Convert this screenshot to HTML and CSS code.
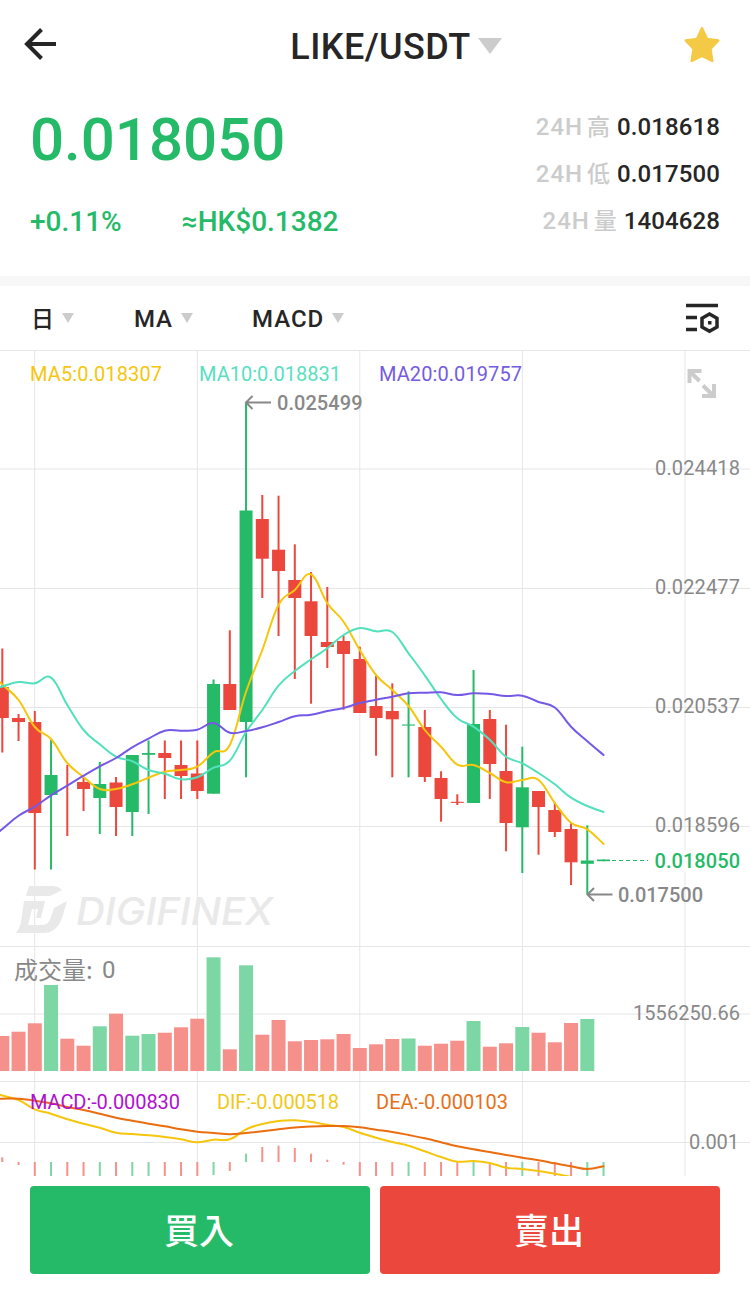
FILE: index.html
```html
<!DOCTYPE html>
<html lang="zh-Hant">
<head>
    <meta charset="UTF-8">
    <meta name="viewport" content="width=device-width, initial-scale=1.0">
    <title>LIKE/USDT</title>
    <link rel="stylesheet" href="styles.css">
</head>
<body>

    <!-- Top bar -->
    <header class="header">
        <svg class="back" width="34" height="34" viewBox="0 0 34 34">
            <path d="M33 17H4M18.500 2.500L4 17l14.500 14.500" />
        </svg>
        <h1 class="pair">LIKE/USDT <span class="caret caret-large"></span></h1>
        <svg class="star" width="38" height="38" viewBox="0 0 38 38">
            <path d="M19 2.200L24 13L35.300 14.500L27.400 22.800L29.300 35L19 29.800L8.700 35L10.600 22.800L2.700 14.500L14 13Z" />
        </svg>
    </header>

    <!-- Price summary -->
    <section class="summary">
        <div class="price-box">
            <div class="price">0.018050</div>
            <div class="change">
                <span class="percent">+0.11%</span>
                <span class="fiat">≈HK$0.1382</span>
            </div>
        </div>
        <div class="stats">
            <div class="stat"><span class="stat-label">24H<i>高</i></span><span class="stat-value">0.018618</span></div>
            <div class="stat"><span class="stat-label">24H<i>低</i></span><span class="stat-value">0.017500</span></div>
            <div class="stat"><span class="stat-label">24H<i>量</i></span><span class="stat-value">1404628</span></div>
        </div>
    </section>

    <!-- Chart toolbar -->
    <nav class="toolbar">
        <div class="tool tool-day"><span class="day">日</span> <span class="caret"></span></div>
        <div class="tool tool-ma">MA <span class="caret"></span></div>
        <div class="tool tool-macd">MACD <span class="caret"></span></div>
        <svg class="settings" width="36" height="32" viewBox="0 0 36 32">
            <path d="M2 3.500H34M2 15.500H13M2 27.500H13" />
            <path d="M25.500 12L33 16.200V25L25.500 29.200L18 25V16.200Z" />
            <rect x="24" y="19" width="3.500" height="3.500" />
        </svg>
    </nav>

    <!-- Candles, volume and MACD -->
    <svg class="chart" width="750" height="826" viewBox="0 350 750 826">
        <g id="grid"></g>

        <g class="watermark">
            <path d="M29 886H54Q60 887 62 890L50 896H26Z" />
            <path d="M24 901H45L41 918H36L38 909H32L28 925H43Q49 924 51 917L54 908L67 901L63 915Q58 933 43 933H15Q19 931 21 922Z" />
            <text x="76" y="925" textLength="197" lengthAdjust="spacingAndGlyphs">DIGIFINEX</text>
        </g>

        <g id="volume"></g>
        <g id="candles"></g>
        <g id="histogram"></g>
        <g id="lines"></g>

        <g class="legend">
            <text class="ma5" x="30" y="381" textLength="132">MA5:0.018307</text>
            <text class="ma10" x="199" y="381" textLength="142">MA10:0.018831</text>
            <text class="ma20" x="379" y="381" textLength="143">MA20:0.019757</text>
            <text class="macd" x="30" y="1109" textLength="150">MACD:-0.000830</text>
            <text class="dif" x="217" y="1109" textLength="122">DIF:-0.000518</text>
            <text class="dea" x="376" y="1109" textLength="132">DEA:-0.000103</text>
        </g>

        <g class="axis">
            <text x="655" y="475" textLength="85">0.024418</text>
            <text x="655" y="594" textLength="85">0.022477</text>
            <text x="655" y="713" textLength="85">0.020537</text>
            <text x="655" y="832" textLength="85">0.018596</text>
            <text x="633" y="1020" textLength="107">1556250.66</text>
            <text x="689" y="1149" textLength="50">0.001</text>
        </g>

        <path class="last-line" d="M612 860.500H648" />
        <rect class="last-back" x="652" y="850" width="90" height="22" />
        <text class="last" x="654.500" y="868" textLength="85.500">0.018050</text>

        <g class="marker">
            <path d="M271 402.500H246M252.500 396L246 402.500L252.500 409" />
            <text x="277" y="410" textLength="85.500">0.025499</text>
            <path d="M612.500 894.500H588M594 888L587.500 894.500L594 901" />
            <text x="618" y="902" textLength="85">0.017500</text>
        </g>

        <text class="volume-title" x="14" y="979">成交量:</text>
        <text class="volume-count" x="102" y="978">0</text>

        <path class="expand" d="M689.500 383V371H701.500M689.500 371L699.500 381M703 385.500L713 395.500M702 396H714V384" />
    </svg>

    <!-- Actions -->
    <footer class="actions">
        <button class="button buy">買入</button>
        <button class="button sell">賣出</button>
    </footer>

    <script src="script.js"></script>
</body>
</html>
```
FILE: styles.css
```css
body {
    margin: 0;
    width: 750px;
    height: 1294px;
    background-color: #fff;
    color: #262626;
    font-family: Roboto, "Noto Sans CJK TC", sans-serif;
    overflow: hidden;
}

.header {
    display: flex;
    justify-content: space-between;
    align-items: center;
    height: 92px;
    padding: 0 29px 0 23px;
    box-sizing: border-box;
}

.back {
    margin-top: -4px;
    fill: none;
    stroke: #262626;
    stroke-width: 4;
}

.pair {
    display: flex;
    align-items: center;
    margin: 2px 0 0 0;
    padding-left: 52px;
    font-size: 36px;
    font-weight: 500;
    letter-spacing: 0.4px;
}

.caret {
    display: inline-block;
    border-left: 6px solid transparent;
    border-right: 6px solid transparent;
    border-top: 10px solid #ccc;
}

.caret-large {
    margin: -3px 0 0 7px;
    border-left-width: 12px;
    border-right-width: 12px;
    border-top-width: 16px;
}

.star {
    margin-top: -3px;
    fill: #f4c945;
    stroke: #f4c945;
    stroke-width: 2.5;
    stroke-linejoin: round;
}

.summary {
    display: flex;
    justify-content: space-between;
    height: 184px;
    padding: 0 30px;
    border-bottom: 10px solid #f7f7f7;
}

.price-box {
    color: #25ba68;
    font-weight: 500;
}

.price {
    margin-top: 12px;
    font-size: 60px;
    line-height: 72px;
}

.change {
    display: flex;
    gap: 60px;
    margin-top: 29px;
    font-size: 28px;
    line-height: 34px;
}

.stats {
    padding-top: 12px;
}

.stat {
    display: flex;
    justify-content: flex-end;
    gap: 7px;
    height: 47px;
    line-height: 47px;
    font-size: 24px;
}

.stat-label {
    color: #ccc;
    font-weight: 500;
    letter-spacing: 1px;
}

.stat-label i {
    margin-left: 4px;
    font-size: 23px;
    font-style: normal;
    letter-spacing: 0;
}

.stat-value {
    font-weight: 500;
    letter-spacing: 0.1px;
}

.toolbar {
    display: flex;
    align-items: center;
    height: 64px;
    padding: 0 30px;
}

.tool {
    display: flex;
    align-items: center;
    gap: 8px;
    margin-top: 2px;
    font-size: 24px;
    font-weight: 500;
    letter-spacing: 0.7px;
}

.tool .caret {
    margin-top: -2px;
}

.tool-day {
    width: 103px;
    padding-left: 1px;
}

.day {
    margin-top: -4px;
    font-size: 23px;
    letter-spacing: 0;
}

.tool-ma {
    width: 118px;
}

.tool-macd {
    letter-spacing: 1px;
}

.settings {
    margin-left: auto;
    fill: none;
    stroke: #262626;
    stroke-width: 3.5;
}

.settings rect {
    fill: #262626;
    stroke: none;
}

.chart {
    display: block;
}

.grid {
    stroke: #e6e6e6;
    stroke-width: 1;
}

.up {
    fill: #25ba68;
}

.down {
    fill: #ec473c;
}

#volume .up,
#histogram .up {
    fill: #7cd7a5;
}

#volume .down,
#histogram .down {
    fill: #f5918a;
}

.line {
    fill: none;
    stroke-width: 2;
    stroke-linecap: round;
}

.line-ma5,
.line-dif {
    stroke: #f5c60d;
}

.line-ma10 {
    stroke: #52e0bd;
}

.line-ma20 {
    stroke: #7559e6;
}

.line-dea {
    stroke: #ea6d10;
}

.watermark {
    fill: #e9e9e9;
    font-family: Inter, sans-serif;
    font-size: 38px;
    font-style: italic;
    font-weight: 500;
}

.legend,
.axis {
    font-size: 20px;
}

.ma5 {
    fill: #f5c60d;
}

.ma10 {
    fill: #58dfbf;
}

.ma20 {
    fill: #745ce0;
}

.macd {
    fill: #b010d0;
}

.dif {
    fill: #f0c818;
}

.dea {
    fill: #e67018;
}

.axis {
    fill: #888;
}

.last-line {
    stroke: #25ba68;
    stroke-width: 1;
    stroke-dasharray: 4 3;
}

.last-back {
    fill: #fff;
}

.last {
    fill: #25ba68;
    font-size: 20px;
    font-weight: 500;
}

.marker path {
    fill: none;
    stroke: #888;
    stroke-width: 2;
}

.marker text {
    fill: #888;
    font-size: 20px;
    font-weight: 500;
}

.volume-title,
.volume-count {
    fill: #888;
    font-size: 24px;
}

.volume-title {
    font-family: "Noto Sans CJK TC", sans-serif;
}

.expand {
    fill: none;
    stroke: #ccc;
    stroke-width: 4;
}

.actions {
    display: flex;
    gap: 10px;
    padding: 10px 30px 0;
}

.button {
    flex: 1;
    height: 88px;
    padding: 0 2px 4px 0;
    border: none;
    border-radius: 4px;
    color: #fff;
    font-family: "Noto Sans CJK TC", sans-serif;
    font-size: 35px;
    font-weight: 500;
}

.buy {
    background-color: #25ba68;
}

.sell {
    background-color: #ec473c;
}
```
FILE: script.js
```js
const STEP = 16.25;
const START = 2.3;

// [direction, wick top, body top, body bottom, wick bottom]
const candles = [
    ['down', 648.5, 687, 718, 752.5], ['down', 714, 718, 722, 741], ['down', 711, 722, 813, 869.5],
    ['up', 740, 775, 795, 869.5], ['down', 765, 765, 765, 836], ['down', 777, 782, 789, 811],
    ['up', 762, 784, 798, 834], ['down', 777, 782.5, 807, 836], ['up', 755, 755, 812, 836],
    ['up', 740.5, 753, 754.8, 814], ['down', 740.5, 753, 758, 799], ['down', 740.5, 765, 776, 799],
    ['down', 740.5, 773.5, 791, 799], ['up', 679.5, 684, 793.7, 793.7], ['down', 630.3, 684, 710, 710],
    ['up', 402.7, 510.5, 722, 777.3], ['down', 495, 519, 558.7, 598], ['down', 495.7, 549.7, 571, 636],
    ['down', 544.3, 580, 598, 679], ['down', 572, 601.3, 636, 703.7], ['down', 587, 642, 647, 668],
    ['down', 635.7, 641, 654, 709.7], ['down', 646.7, 659, 713, 713], ['down', 676, 706, 718, 755.7],
    ['down', 683.3, 711, 719.3, 777.3], ['up', 691.3, 724.5, 725.6, 777.3], ['down', 710, 727, 777, 782],
    ['down', 771.3, 778, 799, 821.7], ['down', 794.3, 801.8, 802.9, 805], ['up', 670, 724, 803, 803],
    ['down', 710, 719, 764, 799], ['down', 724.7, 771, 823, 851.3], ['up', 746.7, 787.3, 827.3, 873],
    ['down', 791, 791, 807, 854.7], ['down', 802.3, 810, 832, 837], ['down', 823.3, 829, 862.3, 885],
    ['up', 825.3, 860.5, 863.8, 894.3], ['up', 859.5, 859.5, 861.2, 861.2]
];

// Top of each volume bar
const volume = [
    1036, 1031.7, 1023.3, 985, 1038.7, 1045.7, 1026.3, 1013.7, 1035.7, 1034, 1032.7, 1027.3, 1018.7,
    957.3, 1049.3, 965.3, 1034.7, 1020, 1041.3, 1040, 1039.3, 1034, 1048, 1044.3, 1039, 1038.5,
    1045.7, 1043.7, 1040.7, 1021, 1046.7, 1043.3, 1027, 1032.7, 1042.3, 1023, 1019
];

// MACD bars that end inside the panel, the others run to its bottom edge
const shortBars = {
    0: 1157.3, 1: 1165, 13: 1175, 14: 1171, 15: 1153.7, 16: 1147, 17: 1145.7,
    18: 1148, 19: 1153.7, 20: 1159.7, 21: 1164.7
};

const lines = {
    dif: [1095.5, 1100, 1109.3, 1113.7, 1119.3, 1123.7, 1127.7, 1132.7, 1134, 1135.3, 1137, 1139.3, 1142.3,
        1139.7, 1139.3, 1129.3, 1124, 1120.9, 1120.3, 1122, 1124.7, 1127, 1132.7, 1137.7, 1142, 1145.7,
        1151.3, 1157, 1161.7, 1161, 1163, 1167.7, 1169, 1171, 1173.7, 1177, 1180, 1182],
    dea: [1098.7, 1098.7, 1100.7, 1103.3, 1107, 1110, 1113.7, 1117.7, 1120.7, 1123.7, 1126.3, 1129.3, 1131.7,
        1133, 1134.3, 1133, 1131.3, 1129.3, 1127.5, 1126.5, 1126, 1126.1, 1127.3, 1129.7, 1132, 1135,
        1138.3, 1142.3, 1146.3, 1149.3, 1152, 1155, 1157.7, 1160.3, 1163.3, 1166.3, 1169, 1166.3],
    ma5: [684.5, 700, 727, 739, 763, 777, 789, 789, 784.3, 777.7, 771.7, 770, 766.7, 752.3, 745, 691.7, 650,
        605, 590, 574.3, 603.3, 621.7, 650, 675, 690, 706, 730, 746.7, 764.7, 765, 773, 782.3, 780, 780,
        803, 822.7, 829.3, 844],
    ma10: [686.5, 682, 683.3, 677.7, 705, 730, 744.3, 756.7, 761.3, 770, 773.7, 779.3, 777.3, 767.7, 760.7,
        732, 710, 685.7, 671, 659.3, 648.3, 635, 628, 631.3, 632, 653.3, 675.3, 699, 718.3, 726.7, 739.7,
        756.7, 763.3, 773, 784.3, 797.7, 806, 812],
    ma20: [829, 815.7, 806.7, 795.3, 785.7, 775.7, 766.3, 758, 747.3, 738.7, 730.7, 730.7, 729.7, 723, 732.7,
        731, 727.3, 722, 716.3, 714.7, 711, 708, 703, 699.7, 696.7, 693.3, 692.7, 692.3, 695, 693.3, 694,
        696, 695.7, 702, 707.5, 726.7, 741.3, 755]
};

function center(i) {
    return START + STEP * i;
}

function rect(name, x, y, width, height) {
    return `<rect class="${name}" x="${x}" y="${y}" width="${width}" height="${height}" />`;
}

// Smooth curve through the points, one for each candle
function curve(values) {
    const p = values.map((y, i) => [center(i), y]);
    p.unshift([center(-1), 2 * values[0] - values[1]]);
    let d = `M${p[0]}`;
    for (let i = 0; i < p.length - 1; i++) {
        const a = p[i - 1] || p[i];
        const b = p[i];
        const c = p[i + 1];
        const e = p[i + 2] || c;
        d += `C${b[0] + (c[0] - a[0]) * 0.2},${b[1] + (c[1] - a[1]) * 0.2} `;
        d += `${c[0] - (e[0] - b[0]) * 0.2},${c[1] - (e[1] - b[1]) * 0.2} ${c}`;
    }
    return d;
}

function draw(id, html) {
    document.getElementById(id).innerHTML = html;
}

const rows = [350.5, 469, 588.5, 707.5, 826.5, 946.5, 1014, 1081.5, 1142.5];
const columns = [34.7, 197.4, 359.8, 522.4, 685];
draw('grid',
    rows.map(y => `<path class="grid" d="M0 ${y}H750" />`).join('') +
    columns.map(x => `<path class="grid" d="M${x} 350V1176" />`).join(''));

draw('candles', candles.map(([dir, high, top, bottom, low], i) =>
    rect(dir, center(i) - 1, high, 2, low - high) +
    rect(dir, center(i) - 6.5, top, 13, bottom - top)).join(''));

draw('volume', volume.map((y, i) =>
    rect(candles[i][0], center(i) - 7, y, 14, 1071 - y)).join(''));

draw('histogram', candles.map(([dir], i) => {
    const end = shortBars[i] || 1176;
    return rect(dir, center(i) - 1, Math.min(end, 1162), 2, Math.abs(end - 1162));
}).join(''));

draw('lines', Object.keys(lines).map(name =>
    `<path class="line line-${name}" d="${curve(lines[name])}" />`).join(''));
```
